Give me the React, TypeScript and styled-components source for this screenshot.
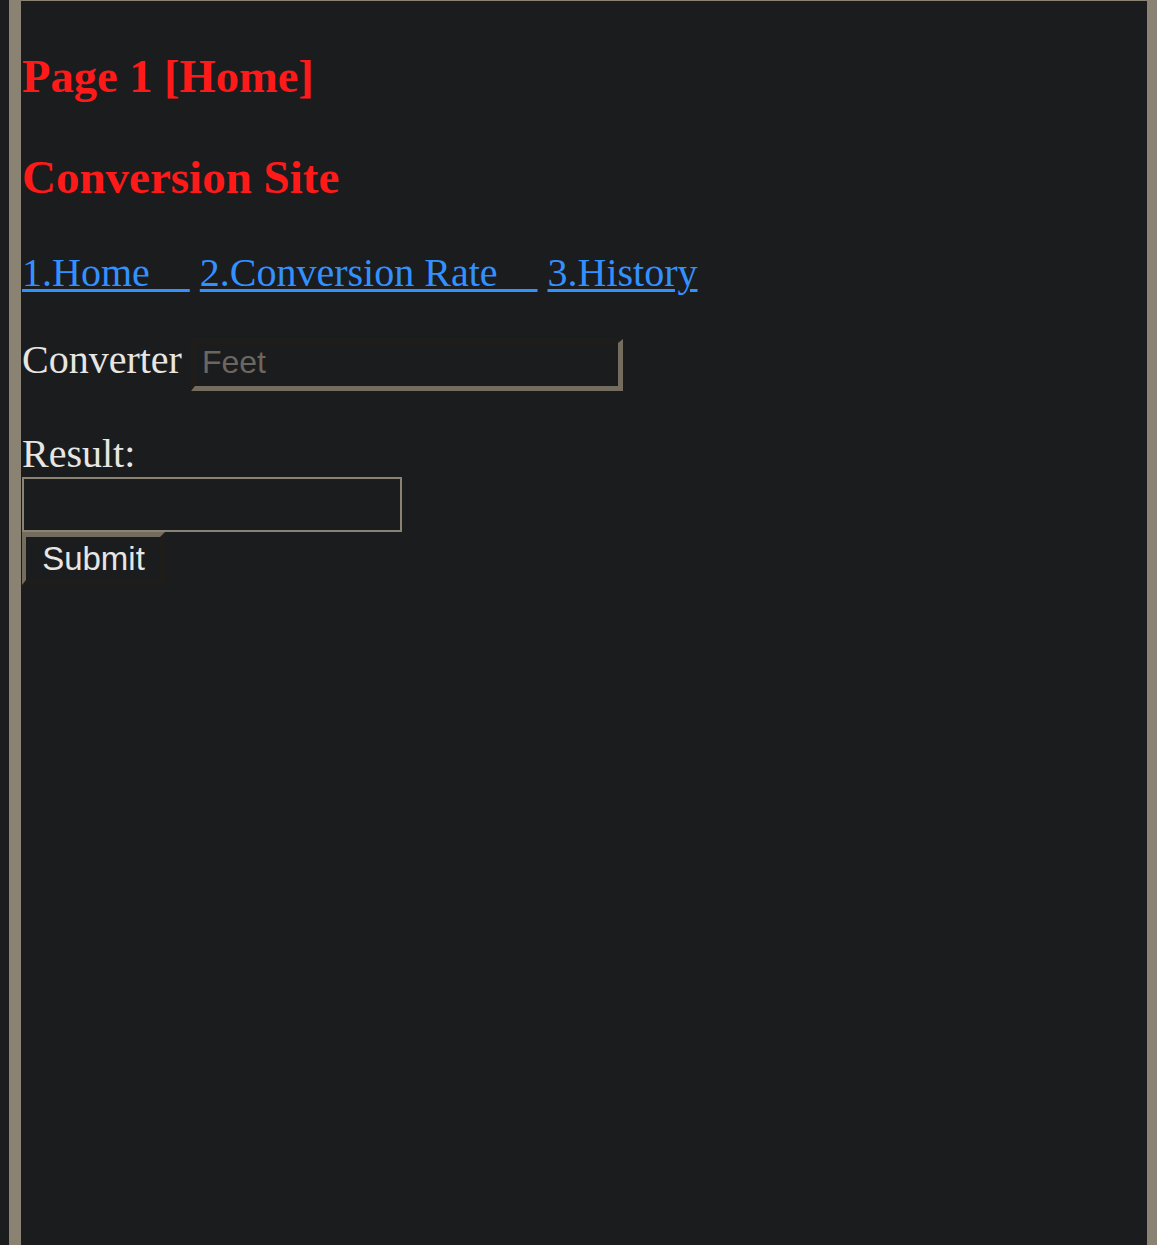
import React from "react";
import styled, { createGlobalStyle } from "styled-components";

const GlobalStyle = createGlobalStyle`
  html, body {
    margin: 0;
    padding: 0;
    background: #1b1c1e;
  }
  body {
    font-family: "Liberation Serif", "Times New Roman", serif;
    color: #e8e6e3;
  }
`;

const Frame = styled.div`
  box-sizing: border-box;
  margin-left: 9px;
  width: calc(100vw - 9px);
  min-height: 100vh;
  border-top: 1px solid #8a8272;
  border-left: 12px solid #8a8272;
  border-right: 10px solid #8a8272;
  background: #1b1c1e;
  padding-left: 1px;
  display: flex;
  flex-direction: column;
  align-items: flex-start;
`;

const Heading = styled.h1<{ $top: number; $size: number }>`
  margin: ${(p) => p.$top}px 0 0;
  font-family: "Liberation Serif", "Times New Roman", serif;
  font-weight: 700;
  font-size: ${(p) => p.$size}px;
  line-height: 54px;
  color: #ff1a1a;
`;

const Nav = styled.nav`
  margin-top: 46px;
  font-size: 40px;
  line-height: 46px;
  white-space: pre;
`;

const NavLink = styled.a`
  color: #3391ff;
  text-decoration: underline;
  text-decoration-thickness: 3px;
  text-underline-offset: 3px;
`;

const ConverterRow = styled.div`
  margin-top: 41px;
  display: flex;
  align-items: baseline;
  gap: 9px;
`;

const Label = styled.label<{ $top?: number }>`
  display: block;
  margin-top: ${(p) => p.$top ?? 0}px;
  font-size: 40px;
  line-height: 46px;
  color: #e8e6e3;
`;

const UnitInput = styled.input`
  box-sizing: border-box;
  width: 432px;
  height: 52px;
  margin: 0;
  padding: 0 6px 4px 7px;
  background: #1b1c1e;
  color: #e8e6e3;
  font-family: "Liberation Sans", Arial, sans-serif;
  font-size: 32px;
  border-style: solid;
  border-width: 4px 5px 5px 4px;
  border-color: #1f1d19 #736c5f #736c5f #1f1d19;
  outline: none;
  &::placeholder {
    color: #6b675f;
  }
`;

const ResultBox = styled.input`
  box-sizing: border-box;
  display: block;
  width: 380px;
  height: 55px;
  margin: 0;
  padding: 0 6px;
  background: #1b1c1e;
  color: #e8e6e3;
  font-family: "Liberation Sans", Arial, sans-serif;
  font-size: 32px;
  border: 2px solid #8a8272;
  outline: none;
`;

const SubmitButton = styled.button`
  box-sizing: border-box;
  display: block;
  width: 143px;
  height: 53px;
  margin: 0;
  padding: 0 0 0 1px;
  background: #1b1c1e;
  color: #e8e6e3;
  font-family: "Liberation Sans", Arial, sans-serif;
  font-size: 33px;
  border-style: solid;
  border-width: 5px 5px 5px 4px;
  border-color: #736c5f #1f1d19 #1f1d19 #736c5f;
  cursor: pointer;
`;

const pad = "\u00a0\u00a0\u00a0\u00a0";

export default function App() {
  return (
    <>
      <GlobalStyle />
      <Frame>
        <Heading $top={49} $size={46.5}>
          Page 1 [Home]
        </Heading>
        <Heading as="h2" $top={46} $size={47}>
          Conversion Site
        </Heading>
        <Nav>
          <NavLink href="#home">{"1.Home" + pad}</NavLink>{" "}
          <NavLink href="#rate">{"2.Conversion Rate" + pad}</NavLink>{" "}
          <NavLink href="#history">3.History</NavLink>
        </Nav>
        <ConverterRow>
          <Label htmlFor="unit">Converter</Label>
          <UnitInput id="unit" type="text" placeholder="Feet" />
        </ConverterRow>
        <Label $top={40} htmlFor="result">
          Result:
        </Label>
        <ResultBox id="result" type="text" />
        <SubmitButton type="button">Submit</SubmitButton>
      </Frame>
    </>
  );
}
